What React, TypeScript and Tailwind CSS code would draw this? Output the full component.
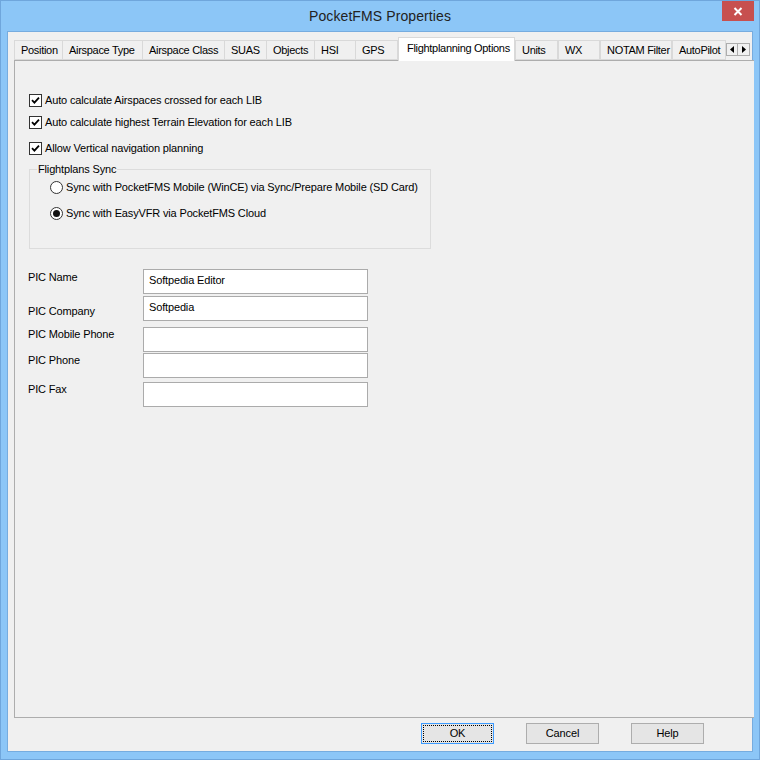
import React from 'react';

const font = { fontFamily: '"Liberation Sans", Arial, sans-serif' };

const tabs: { label: string; w: string }[] = [
  { label: 'Position', w: 'w-[49px]' },
  { label: 'Airspace Type', w: 'w-[80px]' },
  { label: 'Airspace Class', w: 'w-[82px]' },
  { label: 'SUAS', w: 'w-[42px]' },
  { label: 'Objects', w: 'w-[48px]' },
  { label: 'HSI', w: 'w-[41px]' },
  { label: 'GPS', w: 'w-[42px]' },
];

const tabsRight: { label: string; w: string }[] = [
  { label: 'Units', w: 'w-[43px]' },
  { label: 'WX', w: 'w-[42px]' },
  { label: 'NOTAM Filter', w: 'w-[72px]' },
  { label: 'AutoPilot', w: 'w-[54px]' },
];

const Tab = ({ label, w }: { label: string; w: string }) => (
  <div
    className={`${w} h-[20px] shrink-0 overflow-hidden whitespace-nowrap border border-l-0 border-[#d9d9d9] first:border-l bg-[#f0f0f0] pl-[6px] leading-[18px] text-[11px] tracking-[-0.3px] text-black`}
  >
    {label}
  </div>
);

const Check = ({ label, className = '' }: { label: string; className?: string }) => (
  <div className={`flex items-center gap-[3px] ${className}`}>
    <div className="flex h-[13px] w-[13px] items-center justify-center border border-[#333] bg-white">
      <svg width="9" height="9" viewBox="0 0 9 9">
        <path d="M1 4.2 L3.4 6.6 L8 1.6" fill="none" stroke="#000" strokeWidth="1.8" />
      </svg>
    </div>
    <span className="text-[11px] leading-[13px] tracking-[-0.15px]">{label}</span>
  </div>
);

const Radio = ({ label, checked, className = '' }: { label: string; checked?: boolean; className?: string }) => (
  <div className={`flex items-center gap-[3px] ${className}`}>
    <div className="flex h-[13px] w-[13px] items-center justify-center rounded-full border border-[#333] bg-white">
      {checked && <div className="h-[7px] w-[7px] rounded-full bg-[#111]" />}
    </div>
    <span className="text-[11px] leading-[13px] tracking-[-0.15px]">{label}</span>
  </div>
);

const Field = ({ label, value, gap, labelTop }: { label: string; value?: string; gap: string; labelTop: string }) => (
  <div className={`flex ${gap}`}>
    <div className={`w-[115px] text-[11px] leading-[13px] tracking-[-0.15px] ${labelTop}`}>{label}</div>
    <div className="h-[25px] w-[225px] border border-[#ababab] bg-white pl-[5px] pt-[4px] text-[11px] leading-[13px] tracking-[-0.15px]">
      {value}
    </div>
  </div>
);

const Btn = ({ label, focused }: { label: string; focused?: boolean }) => (
  <div
    className={`flex h-[21px] w-[73px] items-center justify-center border ${focused ? 'border-[#3c9bff]' : 'border-[#adadad]'} bg-[#e5e5e5] p-[1px]`}
  >
    <div
      className={`flex h-full w-full items-center justify-center text-[11px] tracking-[-0.15px] ${focused ? 'border border-dotted border-black' : ''}`}
    >
      {label}
    </div>
  </div>
);

export default function App() {
  return (
    <div style={font} className="h-[760px] w-[760px] border border-[#6fa6dc] bg-[#8cc6f7] text-black">
      {/* title bar */}
      <div className="relative flex h-[30px] items-center justify-center">
        <span className="text-[14px] tracking-[0.1px] text-[#222]">PocketFMS Properties</span>
        <div className="absolute right-[5px] top-0 flex h-[20px] w-[32px] items-center justify-center bg-[#c7504f]">
          <svg width="10" height="9" viewBox="0 0 10 9">
            <path d="M1.5 1 L8.5 8 M8.5 1 L1.5 8" stroke="#fff" strokeWidth="2" />
          </svg>
        </div>
      </div>

      {/* client */}
      <div className="ml-[6px] h-[721px] w-[746px] border border-[#76acdf] bg-[#f0f0f0] pl-[6px] pt-[5px]">
        {/* tab strip */}
        <div className="relative z-10 flex h-[23px] items-end">
          {tabs.map((t) => (
            <Tab key={t.label} {...t} />
          ))}
          <div className="-mb-[1px] h-[24px] w-[117px] shrink-0 border border-b-0 border-[#d9d9d9] bg-white pl-[8px] pt-[3px] text-[11px] leading-[14px] tracking-[-0.3px]">
            Flightplanning Options
          </div>
          {tabsRight.map((t) => (
            <div key={t.label} className="flex">
              <Tab {...t} />
            </div>
          ))}
          <div className="mb-[4px] flex">
            <div className="flex h-[13px] w-[12px] items-center justify-center border border-[#adadad] bg-[#f0f0f0]">
              <svg width="4" height="7" viewBox="0 0 4 7">
                <path d="M4 0 L0 3.5 L4 7 Z" fill="#000" />
              </svg>
            </div>
            <div className="flex h-[13px] w-[12px] items-center justify-center border border-l-0 border-[#adadad] bg-[#f0f0f0]">
              <svg width="4" height="7" viewBox="0 0 4 7">
                <path d="M0 0 L4 3.5 L0 7 Z" fill="#000" />
              </svg>
            </div>
          </div>
        </div>

        {/* tab page */}
        <div className="h-[658px] w-[740px] border border-r-0 border-[#adadad] bg-[#f0f0f0] pl-[14px] pt-[33px]">
          <Check label="Auto calculate Airspaces crossed for each LIB" />
          <Check label="Auto calculate highest Terrain Elevation for each LIB" className="mt-[9px]" />
          <Check label="Allow Vertical navigation planning" className="mt-[13px]" />

          <fieldset className="mt-[8px] h-[86px] w-[402px] border border-[#dcdcdc] pl-[20px]">
            <legend className="-ml-[13px] px-[1px] text-[11px] leading-[13px] tracking-[-0.15px]">Flightplans Sync</legend>
            <Radio label="Sync with PocketFMS Mobile (WinCE) via Sync/Prepare Mobile (SD Card)" className="mt-[5px]" />
            <Radio label="Sync with EasyVFR via PocketFMS Cloud" checked className="mt-[13px]" />
          </fieldset>

          <div className="-ml-[1px] mt-[20px] flex flex-col">
            <Field label="PIC Name" value="Softpedia Editor" gap="" labelTop="pt-[2px]" />
            <Field label="PIC Company" value="Softpedia" gap="mt-[2px]" labelTop="pt-[9px]" />
            <Field label="PIC Mobile Phone" gap="mt-[6px]" labelTop="pt-[1px]" />
            <Field label="PIC Phone" gap="mt-[1px]" labelTop="pt-[1px]" />
            <Field label="PIC Fax" gap="mt-[4px]" labelTop="pt-[1px]" />
          </div>
        </div>

        {/* buttons */}
        <div className="mr-[48px] mt-[5px] flex justify-end gap-[32px]">
          <Btn label="OK" focused />
          <Btn label="Cancel" />
          <Btn label="Help" />
        </div>
      </div>
    </div>
  );
}
